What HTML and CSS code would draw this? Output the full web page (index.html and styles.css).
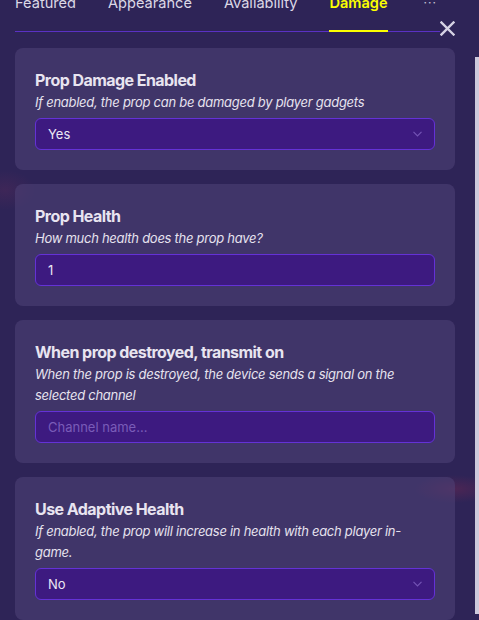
FILE: index.html
```html
<!DOCTYPE html>
<html lang="en">
<head>
<meta charset="utf-8">
<title>Prop settings - Damage</title>
<link rel="stylesheet" href="styles.css">
</head>
<body>
<div class="panel">
  <nav class="tabs">
    <span class="tab">Featured</span>
    <span class="tab">Appearance</span>
    <span class="tab">Availability</span>
    <span class="tab active">Damage</span>
    <span class="tab more">···</span>
  </nav>
  <button class="close" aria-label="Close">
    <svg width="15" height="15" viewBox="0 0 15 15"><path d="M1.5 1.5 L13.5 13.5 M13.5 1.5 L1.5 13.5" stroke="#d6d2e4" stroke-width="2.4" stroke-linecap="square" fill="none"/></svg>
  </button>

  <div class="cards">
    <section class="card">
      <h3 class="title">Prop Damage Enabled</h3>
      <p class="desc">If enabled, the prop can be damaged by player gadgets</p>
      <div class="field select"><span>Yes</span>
        <svg class="chev" width="9" height="6" viewBox="0 0 9 6"><path d="M0.5 0.8 L4.5 4.8 L8.5 0.8" stroke="#7353b4" stroke-width="1.2" fill="none"/></svg>
      </div>
    </section>

    <section class="card">
      <h3 class="title">Prop Health</h3>
      <p class="desc">How much health does the prop have?</p>
      <div class="field"><span>1</span></div>
    </section>

    <section class="card">
      <h3 class="title">When prop destroyed, transmit on</h3>
      <p class="desc">When the prop is destroyed, the device sends a signal on the selected channel</p>
      <div class="field"><span class="placeholder">Channel name...</span></div>
    </section>

    <section class="card">
      <h3 class="title">Use Adaptive Health</h3>
      <p class="desc">If enabled, the prop will increase in health with each player in-game.</p>
      <div class="field select"><span>No</span>
        <svg class="chev" width="9" height="6" viewBox="0 0 9 6"><path d="M0.5 0.8 L4.5 4.8 L8.5 0.8" stroke="#7353b4" stroke-width="1.2" fill="none"/></svg>
      </div>
    </section>
  </div>
  <div class="scrollbar"></div>
</div>
</body>
</html>
```

FILE: styles.css
```css
* { box-sizing: border-box; }
html, body { margin: 0; padding: 0; }
body {
  width: 479px;
  height: 620px;
  overflow: hidden;
  font-family: Inter, "Noto Sans", sans-serif;
  color: #e6e2ee;
  background:
    radial-gradient(ellipse 40px 14px at 455px 489px, rgba(130,40,80,0.35), transparent),
    radial-gradient(ellipse 30px 20px at 5px 190px, rgba(110,45,90,0.25), transparent),
    #2e2457;
}
.panel {
  position: relative;
  height: 620px;
}
.tabs {
  display: flex;
  gap: 32px;
  margin: -6px 39px 0 15px;
  border-bottom: 1px solid #5a31c4;
  font-size: 14.6px;
  line-height: 18px;
}
.tab {
  color: #dcd8e6;
  padding-bottom: 18px;
  border-bottom: 2px solid transparent;
  margin-bottom: -1px;
  white-space: nowrap;
}
.tab.active {
  color: #fbff00;
  font-weight: 600;
  border-bottom-color: #fbff00;
}
.tab.more {
  color: #c9c4d8;
  letter-spacing: 1px;
  font-size: 12px;
  margin-left: 4px;
  border-bottom: none;
}
.close {
  position: absolute;
  top: 27px;
  left: 440px;
  width: 15px;
  height: 15px;
  padding: 0;
  border: 0;
  background: none;
  display: block;
}
.close svg { display: block; }
.cards {
  display: flex;
  flex-direction: column;
  gap: 14px;
  margin: 16px 24px 0 15px;
}
.card {
  background: rgba(80, 68, 120, 0.55);
  border-radius: 8px;
  padding: 20px;
}
.title {
  margin: 0;
  font-size: 16px;
  line-height: 24px;
  font-weight: 700;
  letter-spacing: -0.55px;
  color: #e8e4f0;
}
.desc {
  margin: 0;
  font-size: 13px;
  line-height: 21px;
  font-style: italic;
  letter-spacing: -0.27px;
  color: #e6e2ee;
}
.field {
  margin-top: 5px;
  height: 32px;
  border: 1px solid #6432d6;
  border-radius: 6px;
  background: #3d1a80;
  display: flex;
  align-items: center;
  justify-content: space-between;
  padding: 0 12px 0 12px;
  font-size: 13px;
  color: #ece8f4;
}
.placeholder { color: #7a5cb8; }
.chev { display: block; }
.scrollbar {
  position: absolute;
  left: 475px;
  top: 63px;
  width: 4px;
  height: 557px;
  background: #cdc9dc;
}
```
